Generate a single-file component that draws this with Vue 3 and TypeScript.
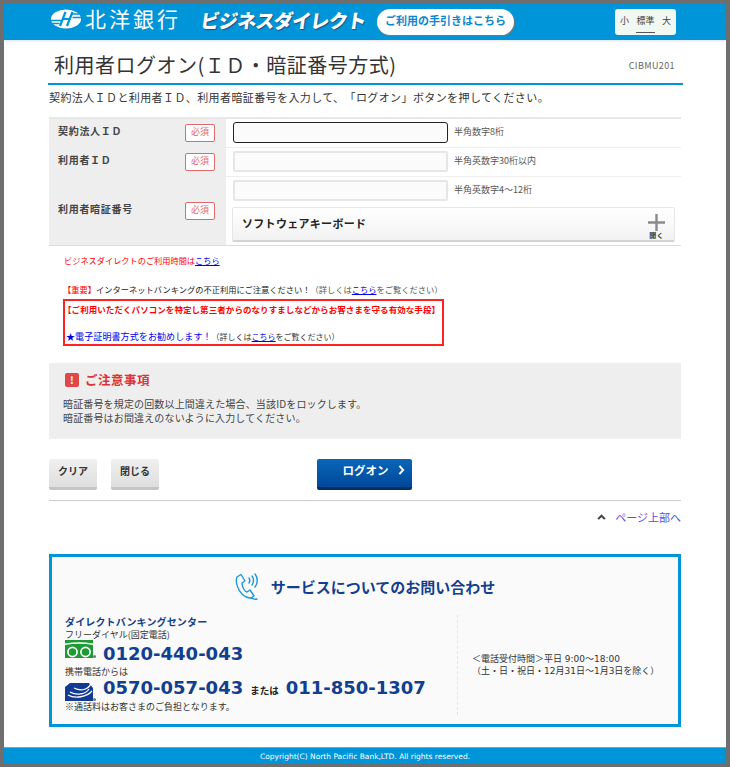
<script setup lang="ts">
interface Row {
  label: string
  hint: string
  keyboard?: boolean
}
const rows: Row[] = [
  { label: '契約法人ＩＤ', hint: '半角数字8桁' },
  { label: '利用者ＩＤ', hint: '半角英数字30桁以内' },
  { label: '利用者暗証番号', hint: '半角英数字4～12桁', keyboard: true },
]
const sizes = ['小', '標準', '大']
</script>

<template>
  <div class="frame">
    <header class="top">
      <svg class="logo" viewBox="0 0 30 20" width="30" height="20">
        <ellipse cx="15" cy="10" rx="15" ry="9.500" fill="#fff" />
        <path d="M0 11.500h10M1 14.500h7.500M20 5h9M21.500 8.500h8.500" stroke="#0095d9" stroke-width="1.500" fill="none" />
        <path d="M14.500 3 9 17M21.500 3 16 17M11 10h9" stroke="#0095d9" stroke-width="2.200" fill="none" />
      </svg>
      <span class="bank">北洋銀行</span>
      <span class="product">ビジネスダイレクト</span>
      <a class="guide">ご利用の手引きはこちら</a>
      <div class="sizes">
        <span v-for="s in sizes" :key="s" :class="{ on: s === '標準' }">{{ s }}</span>
      </div>
    </header>

    <main class="main">
      <div class="title-row">
        <h1>利用者ログオン(ＩＤ・暗証番号方式)</h1>
        <span class="code">CIBMU201</span>
      </div>
      <p class="lead">契約法人ＩＤと利用者ＩＤ、利用者暗証番号を入力して、「ログオン」ボタンを押してください。</p>

      <div class="form">
        <div v-for="(r, i) in rows" :key="r.label" class="row" :class="{ tall: r.keyboard }">
          <div class="label">
            <span class="label-text" :class="{ mid: r.keyboard }">{{ r.label }}</span>
            <span class="req">必須</span>
          </div>
          <div class="field">
            <div class="line">
              <div class="input" :class="{ focus: i === 0 }"></div>
              <span class="hint">{{ r.hint }}</span>
            </div>
            <div v-if="r.keyboard" class="keyboard">
              <span>ソフトウェアキーボード</span>
              <div class="open">
                <svg viewBox="0 0 17 17" width="17" height="17">
                  <path d="M8.500 0v17M0 8.500h17" stroke="#8a8a8a" stroke-width="2.400" />
                </svg>
                <small>開く</small>
              </div>
            </div>
          </div>
        </div>
      </div>

      <div class="notes">
        <p class="hours"><span class="red">ビジネスダイレクトのご利用時間は</span><a class="link">こちら</a></p>
        <p class="important"><span class="red">【重要】</span>インターネットバンキングの不正利用にご注意ください！<span class="sub">（詳しくは<a class="link">こちら</a>をご覧ください）</span></p>
        <div class="redbox">
          <p class="red strong">【ご利用いただくパソコンを特定し第三者からのなりすましなどからお客さまを守る有効な手段】</p>
          <p class="cert"><span class="blue">★電子証明書方式をお勧めします！</span><span class="small">（詳しくは<a class="link">こちら</a>をご覧ください）</span></p>
        </div>
      </div>

      <section class="caution">
        <h2>
          <span class="bang">!</span>ご注意事項
        </h2>
        <p>暗証番号を規定の回数以上間違えた場合、当該IDをロックします。</p>
        <p>暗証番号はお間違えのないように入力してください。</p>
      </section>

      <div class="actions">
        <button class="btn">クリア</button>
        <button class="btn">閉じる</button>
        <button class="btn primary">ログオン
          <svg viewBox="0 0 8 12" width="7" height="10"><path d="M1.500 1 6 6l-4.500 5" stroke="#fff" stroke-width="2.400" fill="none" /></svg>
        </button>
      </div>

      <div class="pagetop">
        <svg viewBox="0 0 10 7" width="9" height="6"><path d="M1 6 5 2l4 4" stroke="#444" stroke-width="2.400" fill="none" /></svg>
        <a>ページ上部へ</a>
      </div>

      <section class="contact">
        <h2>
          <svg viewBox="0 0 24 28" width="24" height="28" fill="none" stroke="#1c97d8" stroke-width="1.400" stroke-linejoin="round" stroke-linecap="round">
            <path d="M6 1.500 2 4C0 9 3 17 7 21c3 3 6 4 9 4l3-2-4-6-3 2c-2 0-5-5-5-9l3-2Z" />
            <path d="M16 25c2 0 3 2 6 1" />
            <path d="M14 5c1 1.500 1 3.500 0 5M17 3c2 2.500 2 6.500 0 9M20 1c3 3.500 3 9.500 0 13" />
          </svg>
          <span>サービスについてのお問い合わせ</span>
        </h2>
        <div class="contact-body">
          <div class="contact-left">
            <p class="center-name">ダイレクトバンキングセンター</p>
            <p class="tel-label">フリーダイヤル(固定電話)</p>
            <div class="tel">
              <svg class="badge" viewBox="0 0 28 18" width="28" height="18">
                <rect width="28" height="18" fill="#1d9a33" />
                <path d="M0 4.200c8-1.500 20-1.500 28 0" fill="none" stroke="#fff" stroke-width="1.500" />
                <circle cx="7.500" cy="12" r="4.600" fill="none" stroke="#fff" stroke-width="1.700" />
                <circle cx="20.500" cy="12" r="4.600" fill="none" stroke="#fff" stroke-width="1.700" />
              </svg>
              <i class="dot"></i>
              <strong>0120-440-043</strong>
            </div>
            <p class="tel-label mobile">携帯電話からは</p>
            <div class="tel second">
              <svg class="badge" viewBox="0 0 28 18" width="28" height="18">
                <rect width="28" height="18" fill="#123a92" />
                <path d="M0 0h5l-5 4ZM28 0h-4l4 5Z" fill="#fff" />
                <path d="M26 0c-2 6-9 9-17 5M24 6c-3 5-12 7-19 3M27 8c-5 6-17 8-24 4" fill="none" stroke="#fff" stroke-width="1.300" />
              </svg>
              <i class="dot"></i>
              <strong>0570-057-043</strong>
              <em>または</em>
              <strong>011-850-1307</strong>
            </div>
            <p class="fee">※通話料はお客さまのご負担となります。</p>
          </div>
          <div class="contact-right">
            <p>＜電話受付時間＞平日 9:00～18:00</p>
            <p>（土・日・祝日・12月31日～1月3日を除く）</p>
          </div>
        </div>
      </section>
    </main>

    <footer class="foot">Copyright(C) North Pacific Bank,LTD. All rights reserved.</footer>
  </div>
</template>

<style>
html,
body {
  margin: 0;
  background: #6e6e6e;
}
</style>

<style scoped>
* {
  box-sizing: border-box;
}
p,
h1,
h2 {
  margin: 0;
  font-weight: normal;
}
.frame {
  width: 730px;
  height: 767px;
  border-style: solid;
  border-color: #6e6e6e;
  border-width: 4px 4px 3px 4px;
  background: #fff;
  display: flex;
  flex-direction: column;
  overflow: hidden;
  color: #333;
  font-family: "Noto Sans CJK JP", "Noto Sans", sans-serif;
  text-spacing-trim: space-all;
}
.top {
  height: 36px;
  flex: none;
  background: #0095d9;
  display: flex;
  align-items: center;
  padding-left: 47px;
  color: #fff;
  box-shadow: 0 1px 2px rgba(0, 0, 0, 0.12);
}
.logo {
  flex: none;
  margin-top: -7px;
}
.bank {
  font-size: 21px;
  letter-spacing: 3px;
  margin-left: 4px;
  line-height: 1;
  width: 116px;
  margin-top: -7px;
}
.product {
  font-size: 19px;
  font-weight: 900;
  letter-spacing: -0.7px;
  text-shadow: 1px 1px 1px #1f4f86;
  line-height: 1;
  width: 176px;
  white-space: nowrap;
  display: inline-block;
  transform: skewX(-8deg);
  margin-top: -5px;
}
.guide {
  width: 137px;
  height: 26px;
  border-radius: 13px;
  background: #fff;
  color: #0a87cd;
  font-size: 11px;
  font-weight: 700;
  display: flex;
  justify-content: center;
  align-items: center;
  box-shadow: 1px 1px 1px #777;
  margin-top: -1px;
  padding-bottom: 3px;
}
.sizes {
  margin-left: 101px;
  width: 61px;
  height: 26px;
  background: #f1f7f1;
  border-radius: 3px;
  display: flex;
  justify-content: space-between;
  padding: 3px 5px 0;
  font-size: 9px;
  line-height: 18px;
  color: #444;
}
.sizes span {
  height: 21px;
}
.sizes .on {
  border-bottom: 1px solid #555;
}
.main {
  flex: 1;
  padding: 0 45px 0 45px;
  min-height: 0;
}
.title-row {
  height: 45px;
  display: flex;
  justify-content: space-between;
  align-items: center;
  border-bottom: 2px solid #0095d9;
  padding: 7px 8px 0 6px;
  margin-right: -2px;
  margin-left: -1px;
}
h1 {
  font-size: 20px;
  line-height: 30px;
  color: #333;
  letter-spacing: 0.5px;
}
.code {
  font-size: 9px;
  color: #666;
  letter-spacing: 0.4px;
}
.lead {
  font-size: 11px;
  line-height: 16px;
  margin-top: 4px;
  letter-spacing: 0.4px;
  white-space: nowrap;
}
.form {
  margin-top: 12px;
  border-top: 2px solid #e8e8e8;
  border-bottom: 1px solid #ddd;
  width: 632px;
}
.row {
  display: flex;
  min-height: 29px;
  border-bottom: 1px solid #eee;
}
.row:last-child {
  border-bottom: 0;
}
.row.tall {
  min-height: 68px;
}
.label {
  width: 177px;
  flex: none;
  background: #eee;
  display: flex;
  align-items: center;
  justify-content: space-between;
  padding: 0 11px 0 9px;
}
.label-text {
  font-size: 10px;
  font-weight: 700;
  color: #444;
  letter-spacing: 0.7px;
  margin-top: -5px;
}
.label-text.mid {
  margin-top: -6px;
}
.req {
  width: 30px;
  height: 18px;
  border: 1.500px solid #e26a6a;
  border-radius: 2px;
  background: #fff;
  color: #e26a6a;
  font-size: 9px;
  line-height: 14px;
  text-align: center;
}
.field {
  flex: 1;
  padding: 3px 6px 0 7px;
}
.line {
  display: flex;
  align-items: center;
}
.input {
  width: 215px;
  height: 21px;
  border: 2px solid #e6e6e6;
  border-radius: 2px;
  background: #fbfbfb;
}
.input.focus {
  border: 1.500px solid #222;
  border-radius: 3px;
}
.hint {
  margin-left: 6px;
  margin-bottom: 2px;
  font-size: 9px;
  color: #555;
}
.keyboard {
  margin-top: 6px;
  width: 443px;
  height: 35px;
  margin-left: -1px;
  border: 1px solid #e6e6e6;
  border-bottom: 2px solid #d4d4d4;
  border-radius: 2px;
  background: linear-gradient(#fff, #f2f2f2);
  display: flex;
  justify-content: space-between;
  align-items: center;
  padding: 0 9px 0 9px;
  font-size: 11px;
  font-weight: 700;
  color: #222;
  letter-spacing: 0.3px;
}
.keyboard > span {
  margin-top: -2px;
}
.open {
  display: flex;
  flex-direction: column;
  align-items: center;
  padding-top: 5px;
}
.open small {
  font-size: 7px;
  line-height: 9px;
  color: #333;
}
.notes {
  padding-left: 14px;
}
.red {
  color: #ff0000;
}
.link {
  color: #0000ee;
  text-decoration: underline;
}
.hours {
  font-size: 8.200px;
  line-height: 12px;
  margin-top: 8px;
  white-space: nowrap;
  margin-left: 1px;
}
.important {
  margin-top: 17px;
  font-size: 8.250px;
  line-height: 12px;
  color: #222;
  white-space: nowrap;
}
.sub {
  color: #555;
}
.redbox {
  margin-top: 4px;
  width: 381px;
  height: 47px;
  border: 2px solid #f22;
  padding: 2px 1px 0 1px;
  font-size: 8.500px;
  line-height: 12px;
  white-space: nowrap;
}
.strong {
  font-weight: 700;
  margin-left: -3px;
  letter-spacing: 0.07px;
}
.cert {
  margin-top: 15px;
}
.blue {
  color: #0000ee;
  font-size: 9px;
  letter-spacing: 0.1px;
}
.small {
  font-size: 8px;
}
.caution {
  margin-top: 17px;
  width: 632px;
  height: 76px;
  background: #eee;
  padding: 8px 14px;
}
.caution h2 {
  display: flex;
  align-items: center;
  gap: 6px;
  color: #d33;
  font-size: 12.500px;
  font-weight: 700;
  line-height: 18px;
  letter-spacing: 0.5px;
  margin-bottom: 8px;
  padding-left: 2px;
}
.bang {
  width: 14px;
  height: 14px;
  border-radius: 2px;
  background: #e04848;
  color: #fff;
  text-align: center;
  font-size: 10px;
  line-height: 14px;
}
.caution p {
  font-size: 10px;
  line-height: 14px;
  letter-spacing: 0.15px;
  color: #444;
}
.actions {
  margin-top: 20px;
  padding-bottom: 10px;
  width: 632px;
  border-bottom: 1px solid #ccc;
  display: flex;
  box-sizing: content-box;
  height: 31px;
}
.btn {
  width: 48px;
  height: 31px;
  margin-right: 13px;
  border: 0;
  border-bottom: 3px solid #c4c4c4;
  border-radius: 2px;
  background: linear-gradient(#f0f0f0, #dedede);
  color: #333;
  font: 700 10px "Noto Sans CJK JP", sans-serif;
  padding: 0 0 6px;
}
.btn:first-child {
  margin-right: 14px;
}
.primary {
  width: 95px;
  margin-left: 145px;
  margin-right: 0;
  background: linear-gradient(#0a66b8, #00489a);
  border-bottom: 3px solid #002f66;
  color: #fff;
  font-size: 11.500px;
  display: flex;
  align-items: center;
  justify-content: center;
  gap: 9px;
  padding: 0 0 6px 18px;
}
.pagetop {
  margin-top: 7px;
  display: flex;
  justify-content: flex-end;
  align-items: center;
  gap: 9px;
  width: 632px;
  height: 17px;
  font-size: 11px;
}
.pagetop a {
  color: #4f4fee;
}
.contact {
  margin-top: 29px;
  width: 632px;
  height: 173px;
  border: 3px solid #0095d9;
  background: #fafafb;
}
.contact h2 {
  display: flex;
  justify-content: center;
  align-items: center;
  gap: 12px;
  color: #123f8f;
  font-size: 15px;
  font-weight: 700;
  padding: 12px 3px 0 3px;
  height: 47px;
}
.contact-body {
  display: flex;
  margin-top: 11px;
}
.contact-left {
  width: 406px;
  padding-left: 13px;
  height: 100px;
  border-right: 1px dashed #e4e4e4;
  color: #333;
}
.center-name {
  color: #123f8f;
  font-size: 10px;
  font-weight: 700;
  line-height: 14px;
  letter-spacing: 0.15px;
}
.tel-label {
  font-size: 9px;
  line-height: 11px;
}
.tel-label.mobile {
  margin-top: 2px;
}
.tel {
  display: flex;
  align-items: center;
  height: 24px;
  color: #123f8f;
  white-space: nowrap;
}
.tel strong {
  font-family: "DejaVu Sans", sans-serif;
  font-size: 18px;
  font-weight: 700;
  line-height: 24px;
  padding-top: 4px;
}
.tel.second strong {
  padding-top: 0;
  padding-bottom: 2px;
}
.tel em {
  font-style: normal;
  font-size: 9.500px;
  font-weight: 700;
  color: #222;
  margin: 2px 7px 0 7px;
}
.badge {
  flex: none;
  align-self: flex-start;
}
.second .badge {
  align-self: flex-end;
}
.dot {
  width: 3px;
  height: 3px;
  border-radius: 50%;
  background: #777;
  margin: 15px 7px 0 0;
  flex: none;
  align-self: flex-start;
}
.second .dot {
  margin-top: 21px;
}
.fee {
  font-size: 9px;
  line-height: 11px;
}
.contact-right {
  padding-left: 14px;
  padding-top: 38px;
  font-family: "DejaVu Sans", "Noto Sans CJK JP", sans-serif;
  font-size: 9px;
  line-height: 12px;
  white-space: nowrap;
}
.foot {
  height: 17px;
  flex: none;
  background: #0095d9;
  color: #fff;
  font-size: 7.500px;
  text-align: center;
  line-height: 19px;
  font-family: "DejaVu Sans", sans-serif;
  box-shadow: inset 0 1px 0 rgba(255,255,255,0.3);
}
</style>
